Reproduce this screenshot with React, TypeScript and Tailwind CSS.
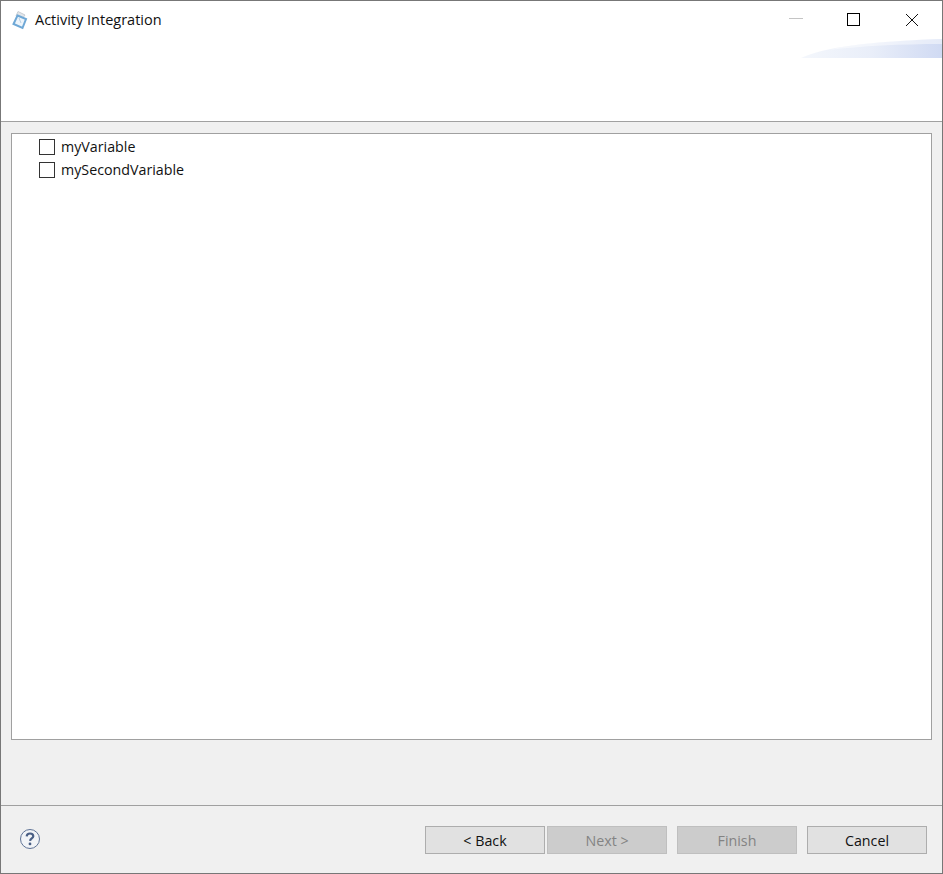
import React from "react";

const font = { fontFamily: '"Open Sans", "Noto Sans", sans-serif' };

function AppIcon() {
  return (
    <svg width="18" height="20" viewBox="0 0 18 20" className="shrink-0">
      <path d="M8 1.5 L15 5 L12 9 L6 6 Z" fill="#e3e6ea" stroke="#c9ced4" strokeWidth="1" />
      <path d="M7.5 5.5 L16 9 L12.5 18 L3.5 14 Z" fill="#eef5fb" stroke="#6fa8d6" strokeWidth="2" />
      <path d="M9 8 L11 13" stroke="#b9cfe3" strokeWidth="1" />
    </svg>
  );
}

function HelpIcon() {
  return (
    <svg width="22" height="22" viewBox="0 0 22 22">
      <circle cx="11" cy="11" r="9.5" fill="#f2f4f7" stroke="#5f7396" strokeWidth="1" />
      <path d="M7.7 8.4 C7.8 6.4 9.2 5.5 11 5.5 C13 5.5 14.3 6.6 14.3 8.2 C14.3 10.4 11.2 10.4 11.1 12.9" fill="none" stroke="#4a5f85" strokeWidth="2.2" />
      <circle cx="11" cy="15.9" r="1.4" fill="#4a5f85" />
    </svg>
  );
}

function Check({ label }: { label: string }) {
  return (
    <div className="flex items-center h-[23px] pl-[27px]">
      <span className="w-[16px] h-[16px] border border-[#333333] bg-white shrink-0" />
      <span className="ml-[6px] text-[14.25px] text-[#111111]">{label}</span>
    </div>
  );
}

function Btn({ label, disabled, className = "" }: { label: string; disabled?: boolean; className?: string }) {
  return (
    <div
      className={
        "w-[120px] h-[28px] pt-px flex items-center justify-center border text-[14.25px] " +
        (disabled
          ? "bg-[#cccccc] border-[#bfbfbf] text-[#838383] "
          : "bg-[#e1e1e1] border-[#adadad] text-[#111111] ") +
        className
      }
    >
      {label}
    </div>
  );
}

export default function App() {
  return (
    <div className="w-[943px] h-[874px] flex flex-col bg-[#f0f0f0] border border-[#777777] overflow-hidden" style={font}>
      <header className="relative h-[120px] bg-white shrink-0">
        <div className="flex items-center h-[38px] pl-[9px] pr-[1px]">
          <AppIcon />
          <span className="ml-[7px] text-[14.5px] text-[#111111]">Activity Integration</span>
          <div className="ml-auto flex items-center h-full">
            <div className="w-[58px] flex justify-center"><span className="w-[14px] h-px bg-[#c4c4c4] -mt-[2px]" /></div>
            <div className="w-[58px] flex justify-center"><span className="w-[13px] h-[13px] border border-black -mt-[1px] -ml-[2px]" /></div>
            <div className="w-[58px] flex justify-center">
              <svg width="14" height="14" viewBox="0 0 14 14" className="-mt-[1px]"><path d="M1 1 L13 13 M13 1 L1 13" stroke="#111" strokeWidth="1" /></svg>
            </div>
          </div>
        </div>
        <svg className="absolute right-0 top-[37px]" width="141" height="21" viewBox="0 0 141 21">
          <defs>
            <linearGradient id="g" x1="0" x2="1" y1="0" y2="0">
              <stop offset="0" stopColor="#f4f7fc" />
              <stop offset="0.5" stopColor="#e9eef9" />
              <stop offset="1" stopColor="#d0daf3" />
            </linearGradient>
          </defs>
          <path d="M0 20 C20 10 70 3 141 1 L141 20 Z" fill="url(#g)" />
          <path d="M28 12 C60 8 100 6 141 6 L141 1 C90 2 50 6 28 12 Z" fill="#ffffff" opacity="0.45" />
        </svg>
      </header>
      <div className="h-px bg-[#a0a0a0] shrink-0" />
      <main className="flex-1 pt-[11px] px-[10px] pb-[65px] flex flex-col min-h-0">
        <div className="flex-1 bg-white border border-[#a0a0a0] pt-[1px]">
          <Check label="myVariable" />
          <Check label="mySecondVariable" />
        </div>
      </main>
      <div className="h-px bg-[#a0a0a0] shrink-0" />
      <footer className="h-[67px] shrink-0 flex items-start pt-[20px] pr-[15px]">
        <div className="ml-[18px] mt-[2px]"><HelpIcon /></div>
        <div className="ml-auto flex">
          <Btn label="< Back" />
          <Btn label="Next >" disabled className="ml-[2px]" />
          <Btn label="Finish" disabled className="ml-[10px]" />
          <Btn label="Cancel" className="ml-[10px]" />
        </div>
      </footer>
    </div>
  );
}
